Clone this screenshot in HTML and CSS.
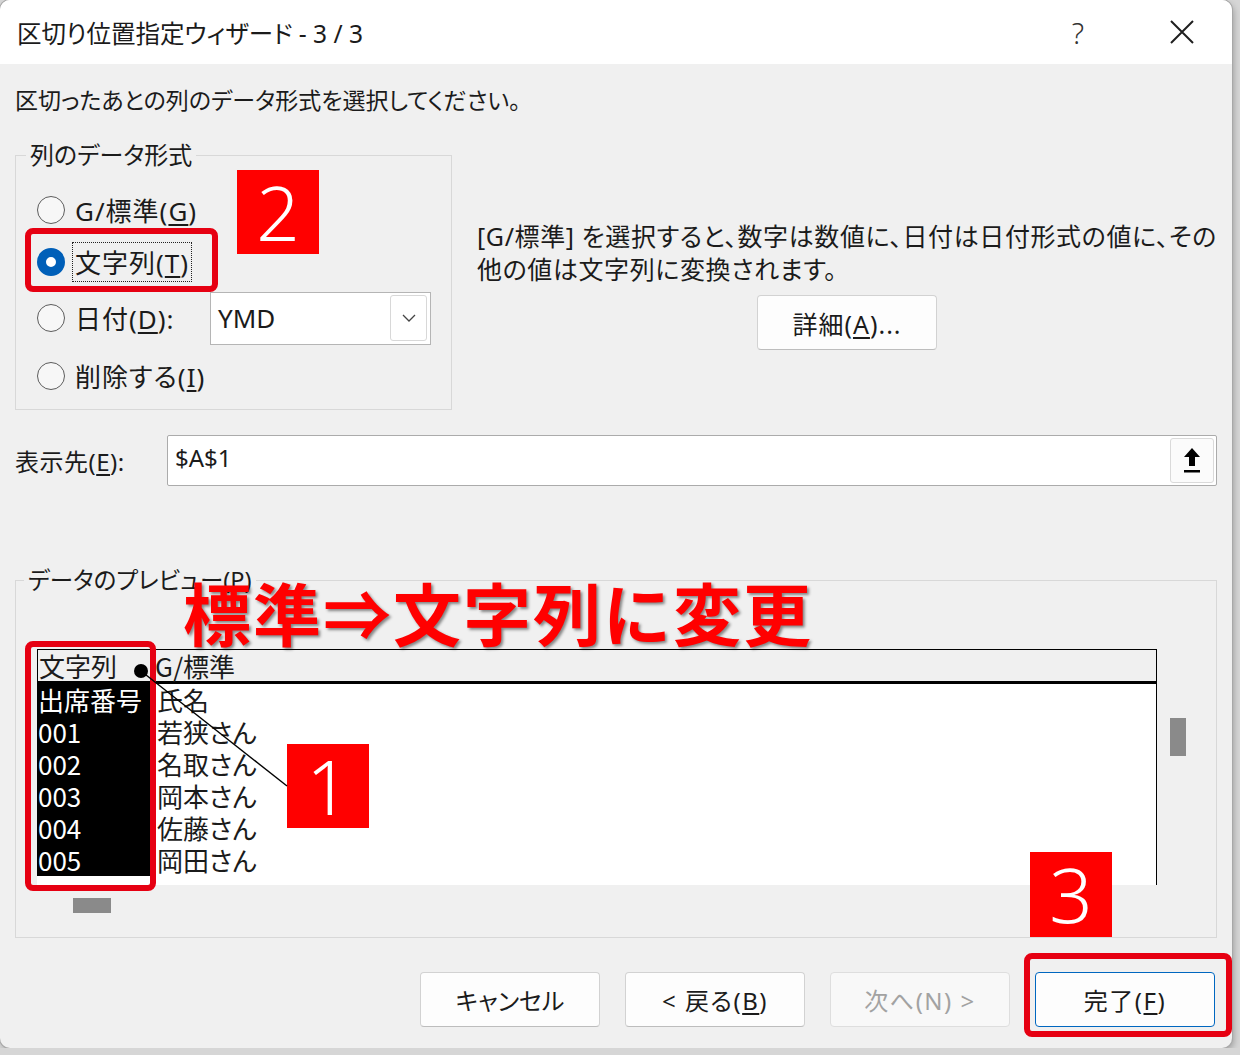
FILE: index.html
```html
<!DOCTYPE html>
<html>
<head>
    <meta charset="utf-8">
    <link rel="stylesheet" href="styles.css">
</head>
<body>
    <div class="dialog">
        <div class="titlebar">
            <span class="title">区切り位置指定ウィザード - 3 / 3</span>
            <span class="help">?</span>
            <span class="close">
                <svg width="24" height="24" viewBox="0 0 24 24"><path d="M1 1 L23 23 M23 1 L1 23" stroke="#1f1f1f" stroke-width="2" fill="none"/></svg>
            </span>
        </div>

        <div class="content">
            <p class="lead">区切ったあとの列のデータ形式を選択してください。</p>

            <div class="format-row">
                <fieldset class="group format-group">
                    <legend>列のデータ形式</legend>
                    <div class="options">
                        <div class="opt">
                            <span class="radio"></span>
                            <span>G/標準(<u>G</u>)</span>
                        </div>
                        <div class="opt">
                            <span class="radio checked"></span>
                            <span class="focus">文字列(<u>T</u>)</span>
                        </div>
                        <div class="opt date">
                            <span class="radio"></span>
                            <span class="date-label">日付(<u>D</u>):</span>
                            <div class="select">
                                <span>YMD</span>
                                <span class="select-btn">
                                    <svg width="14" height="8" viewBox="0 0 14 8"><path d="M1 1 L7 7 L13 1" stroke="#444" stroke-width="1.3" fill="none"/></svg>
                                </span>
                            </div>
                        </div>
                        <div class="opt remove">
                            <span class="radio"></span>
                            <span>削除する(<u>I</u>)</span>
                        </div>
                    </div>
                </fieldset>

                <div class="explain">
                    <p>[G/標準] を選択すると、数字は数値に、日付は日付形式の値に、その<br>他の値は文字列に変換されます。</p>
                    <button class="btn">詳細(<u>A</u>)...</button>
                </div>
            </div>

            <div class="dest">
                <span class="dest-label">表示先(<u>E</u>):</span>
                <div class="dest-input">
                    <span>$A$1</span>
                    <span class="ref-btn">
                        <svg width="20" height="28" viewBox="0 0 20 28"><path d="M10 1 L18 10 H13 V19 H7 V10 H2 Z" fill="#000"/><rect x="2" y="23" width="16" height="2.5" fill="#000"/></svg>
                    </span>
                </div>
            </div>

            <fieldset class="group preview-group">
                <legend>データのプレビュー(P)</legend>
                <div class="preview-inner">
                    <div class="preview-area">
                        <div class="grid">
                            <div class="grid-head">
                                <span class="c1">文字列</span>
                                <span class="c2">G/標準</span>
                            </div>
                            <div class="grid-body">
                                <div class="grid-row"><span class="c1">出席番号</span><span class="c2">氏名</span></div>
                                <div class="grid-row"><span class="c1">001</span><span class="c2">若狭さん</span></div>
                                <div class="grid-row"><span class="c1">002</span><span class="c2">名取さん</span></div>
                                <div class="grid-row"><span class="c1">003</span><span class="c2">岡本さん</span></div>
                                <div class="grid-row"><span class="c1">004</span><span class="c2">佐藤さん</span></div>
                                <div class="grid-row"><span class="c1">005</span><span class="c2">岡田さん</span></div>
                            </div>
                        </div>
                        <div class="vscroll"><div class="vthumb"></div></div>
                    </div>
                    <div class="hthumb"></div>
                </div>
            </fieldset>

            <div class="buttons">
                <button class="btn">キャンセル</button>
                <button class="btn wide">&lt; 戻る(<u>B</u>)</button>
                <button class="btn wide" disabled>次へ(N) &gt;</button>
                <button class="btn wide primary">完了(<u>F</u>)</button>
            </div>
        </div>

        <!-- annotations drawn over the dialog -->
        <div class="mark mark-text"></div>
        <div class="mark mark-col"></div>
        <div class="mark mark-finish"></div>
        <div class="badge badge-1">1</div>
        <div class="badge badge-2">2</div>
        <div class="badge badge-3">3</div>
        <svg class="callout" width="160" height="130" viewBox="0 0 160 130">
            <line x1="11" y1="11" x2="157" y2="126" stroke="#000" stroke-width="1.4"/>
            <circle cx="11" cy="11" r="7" fill="#000"/>
        </svg>
        <div class="headline">標準⇒文字列に変更</div>
    </div>
</body>
</html>
```

FILE: styles.css
```css
* {
    box-sizing: border-box;
}
body {
    margin: 0;
    background: #d6d6d6;
    font-family: "Noto Sans", "Noto Sans CJK JP", sans-serif;
    font-feature-settings: "palt";
    color: #1b1b1b;
}
u {
    text-underline-offset: 3px;
}
.dialog {
    position: relative;
    width: 1232px;
    height: 1048px;
    background: #f0f0f0;
    border-radius: 10px;
    box-shadow: 0 0 0 1px #a8a8a8, 2px 3px 6px rgba(0, 0, 0, 0.25);
    overflow: hidden;
    display: flex;
    flex-direction: column;
}
.titlebar {
    height: 64px;
    flex: none;
    background: #fff;
    display: flex;
    align-items: center;
    padding-left: 17px;
    font-size: 24.5px;
}
.title {
    flex: 1;
}
.help {
    width: 40px;
    text-align: center;
    font-size: 29px;
    color: #333;
    font-weight: 300;
}
.close {
    width: 64px;
    margin-left: 52px;
    margin-right: 18px;
    display: flex;
    justify-content: center;
}
.content {
    flex: 1;
    padding: 0 15px;
}
.lead {
    margin: 20px 0 0;
    font-size: 23px;
    line-height: 32px;
}
.format-row {
    display: flex;
    margin-top: 24px;
}
.group {
    margin: 0;
    min-width: 0;
    border: 1px solid #d8d8d8;
}
.group legend {
    margin-left: 10px;
    padding: 0 4px;
    font-size: 24px;
    line-height: 30px;
}
.format-group {
    width: 437px;
    flex: none;
    padding: 14px 0 5px 0;
}
.options {
    padding-left: 21px;
}
.opt {
    display: flex;
    align-items: center;
    height: 52px;
    font-size: 26px;
    letter-spacing: 1px;
}
.opt.date {
    height: 60px;
}
.opt.remove {
    height: 56px;
}
.radio {
    width: 28px;
    height: 28px;
    flex: none;
    border-radius: 50%;
    border: 1.5px solid #5c5c5c;
    background: #f7f7f7;
    margin-right: 10px;
}
.radio.checked {
    border: 9px solid #005fb8;
    background: #fff;
}
.focus {
    outline: 1px dotted #222;
    padding: 0 2px;
    margin-left: -2px;
}
.date-label {
    width: 135px;
}
.select {
    width: 221px;
    height: 53px;
    background: #fff;
    border: 1px solid #b5b5b5;
    display: flex;
    align-items: center;
    padding-left: 7px;
    letter-spacing: 0;
}
.select-btn {
    margin-left: auto;
    margin-right: 3px;
    width: 37px;
    height: 46px;
    border: 1px solid #d8d8d8;
    border-radius: 3px;
    display: flex;
    align-items: center;
    justify-content: center;
}
.explain {
    flex: 1;
    margin-left: 25px;
    padding-top: 80px;
    display: flex;
    flex-direction: column;
    align-items: center;
}
.explain p {
    align-self: stretch;
    margin: 0;
    font-size: 25px;
    line-height: 33px;
    letter-spacing: 0.6px;
    white-space: nowrap;
}
.btn {
    width: 180px;
    height: 55px;
    font-family: inherit;
    font-feature-settings: "palt";
    font-size: 24px;
    color: #1b1b1b;
    background: #fdfdfd;
    border: 1px solid #d2d2d2;
    border-bottom-color: #bdbdbd;
    border-radius: 4px;
    padding: 0;
}
.btn.wide {
    letter-spacing: 1.5px;
}
.explain .btn {
    margin-top: 9px;
    font-size: 25px;
    letter-spacing: 1px;
}
.btn:disabled {
    color: #a2a2a2;
    background: #f8f8f8;
    border-color: #dedede;
}
.btn.primary {
    border: 1.5px solid #0067c0;
}
.dest {
    display: flex;
    align-items: center;
    margin-top: 25px;
    font-size: 24px;
}
.dest-label {
    width: 152px;
    flex: none;
    letter-spacing: 0.5px;
}
.dest-input {
    flex: 1;
    height: 51px;
    background: #fff;
    border: 1px solid #ababab;
    border-radius: 2px;
    display: flex;
    align-items: center;
    padding-left: 7px;
    padding-bottom: 6px;
}
.ref-btn {
    margin-left: auto;
    margin-right: 2px;
    margin-top: 6px;
    width: 44px;
    height: 45px;
    background: #fbfbfb;
    border: 1px solid #dadada;
    border-radius: 3px;
    display: flex;
    align-items: center;
    justify-content: center;
}
.preview-group {
    margin-top: 79px;
    padding: 54px 0 24px 0;
}
.preview-group legend {
    margin-left: 8px;
    font-size: 23.5px;
}
.preview-inner {
    padding-left: 21px;
}
.preview-area {
    display: flex;
}
.grid {
    width: 1120px;
    height: 236px;
    flex: none;
    border-right: 1px solid #000;
    font-family: "Noto Sans CJK JP", sans-serif;
    font-size: 26px;
    line-height: 31px;
    overflow: hidden;
    background: #fff;
}
.grid-head {
    display: flex;
    height: 35px;
    border-top: 1px solid #000;
    border-bottom: 3px solid #000;
    border-left: 1px solid #000;
    background: #f0f0f0;
}
.grid-head .c1 {
    width: 112px;
}
.grid-head .c2 {
    padding-left: 5px;
}
.grid-row {
    display: flex;
    height: 32px;
}
.c1 {
    width: 113px;
    flex: none;
    padding-left: 1px;
}
.grid-row .c1 {
    background: #000;
    color: #fff;
}
.c2 {
    padding-left: 7px;
}
.vscroll {
    margin-left: 13px;
    width: 16px;
}
.vthumb {
    margin-top: 69px;
    height: 38px;
    background: #8a8a8a;
}
.hthumb {
    margin: 13px 0 0 36px;
    width: 38px;
    height: 15px;
    background: #8a8a8a;
}
.buttons {
    display: flex;
    justify-content: flex-end;
    gap: 25px;
    margin-top: 34px;
    margin-right: 2px;
}

/* annotations */
.mark {
    position: absolute;
    border: 6px solid #e60012;
    border-radius: 8px;
}
.mark-text {
    left: 25px;
    top: 228px;
    width: 193px;
    height: 64px;
}
.mark-col {
    left: 25px;
    top: 641px;
    width: 131px;
    height: 250px;
}
.mark-finish {
    left: 1024px;
    top: 953px;
    width: 208px;
    height: 84px;
}
.badge {
    position: absolute;
    width: 82px;
    height: 84px;
    background: #ff0000;
    color: #fff;
    font-weight: 300;
    font-size: 76px;
    line-height: 84px;
    text-align: center;
}
.badge-1 {
    left: 287px;
    top: 744px;
}
.badge-2 {
    left: 237px;
    top: 170px;
}
.badge-3 {
    left: 1030px;
    top: 852px;
    height: 85px;
}
.callout {
    position: absolute;
    left: 130px;
    top: 660px;
}
.headline {
    position: absolute;
    left: 183px;
    top: 567px;
    font-family: "Noto Sans CJK JP", sans-serif;
    font-feature-settings: normal;
    font-size: 68px;
    line-height: 90px;
    letter-spacing: 2px;
    font-weight: 700;
    color: #ff0000;
    text-shadow: 2px 2px 3px rgba(0, 0, 0, 0.45);
    white-space: nowrap;
}
```
